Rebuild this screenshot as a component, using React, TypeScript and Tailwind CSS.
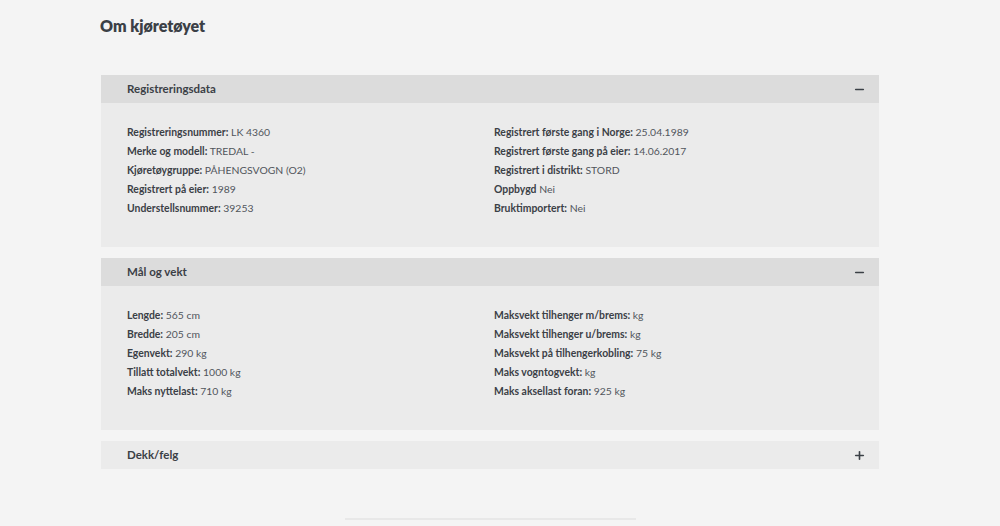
import { Minus, Plus } from 'lucide-react';

type Row = { label: string; value: string; colon?: boolean };

const registrering: [Row[], Row[]] = [
  [
    { label: 'Registreringsnummer', value: 'LK 4360' },
    { label: 'Merke og modell', value: 'TREDAL -' },
    { label: 'Kjøretøygruppe', value: 'PÅHENGSVOGN (O2)' },
    { label: 'Registrert på eier', value: '1989' },
    { label: 'Understellsnummer', value: '39253' },
  ],
  [
    { label: 'Registrert første gang i Norge', value: '25.04.1989' },
    { label: 'Registrert første gang på eier', value: '14.06.2017' },
    { label: 'Registrert i distrikt', value: 'STORD' },
    { label: 'Oppbygd', value: 'Nei', colon: false },
    { label: 'Bruktimportert', value: 'Nei' },
  ],
];

const maalVekt: [Row[], Row[]] = [
  [
    { label: 'Lengde', value: '565 cm' },
    { label: 'Bredde', value: '205 cm' },
    { label: 'Egenvekt', value: '290 kg' },
    { label: 'Tillatt totalvekt', value: '1000 kg' },
    { label: 'Maks nyttelast', value: '710 kg' },
  ],
  [
    { label: 'Maksvekt tilhenger m/brems', value: 'kg' },
    { label: 'Maksvekt tilhenger u/brems', value: 'kg' },
    { label: 'Maksvekt på tilhengerkobling', value: '75 kg' },
    { label: 'Maks vogntogvekt', value: 'kg' },
    { label: 'Maks aksellast foran', value: '925 kg' },
  ],
];

const Column = ({ rows }: { rows: Row[] }) => (
  <ul>
    {rows.map((r) => (
      <li key={r.label} className="h-[19px] leading-[19px] whitespace-nowrap">
        <span className="font-bold text-[#3b4046]">
          {r.label}
          {r.colon === false ? '' : ':'}
        </span>{' '}
        <span className="text-[#50555b]">{r.value}</span>
      </li>
    ))}
  </ul>
);

const Section = ({ title, data, open }: { title: string; data?: [Row[], Row[]]; open: boolean }) => (
  <div className="bg-[#ebebeb]">
    <div
      className={`h-[28px] flex items-center justify-between pl-[26px] pr-[13px] ${open ? 'bg-[#dcdcdc]' : 'bg-[#ebebeb]'}`}
    >
      <span className="text-[11.5px] font-bold text-[#3b4046]">{title}</span>
      {open ? (
        <Minus className="w-[13px] h-[13px] text-[#3b4046]" strokeWidth={3} />
      ) : (
        <Plus className="w-[13px] h-[13px] text-[#3b4046]" strokeWidth={3} />
      )}
    </div>
    {open && data && (
      <div className="flex pl-[26px] pt-[20px] pb-[29px] text-[10.4px]">
        <div className="w-[367px]">
          <Column rows={data[0]} />
        </div>
        <Column rows={data[1]} />
      </div>
    )}
  </div>
);

export default function App() {
  return (
    <div className="min-h-[526px] bg-[#f4f4f4] font-['Lato','Open_Sans',sans-serif] text-[#3b4046]">
      <div className="w-[778px] ml-[101px]">
        <h1 className="pt-[16px] -ml-[1px] text-[16px] leading-[20px] font-extrabold text-[#3b4046]">Om kjøretøyet</h1>
        <div className="mt-[39px] flex flex-col gap-[11px]">
          <Section title="Registreringsdata" data={registrering} open />
          <Section title="Mål og vekt" data={maalVekt} open />
          <Section title="Dekk/felg" open={false} />
        </div>
        <div className="mt-[49px] ml-[244px] w-[291px] h-[2px] bg-[#e8e8e8]" />
      </div>
    </div>
  );
}
